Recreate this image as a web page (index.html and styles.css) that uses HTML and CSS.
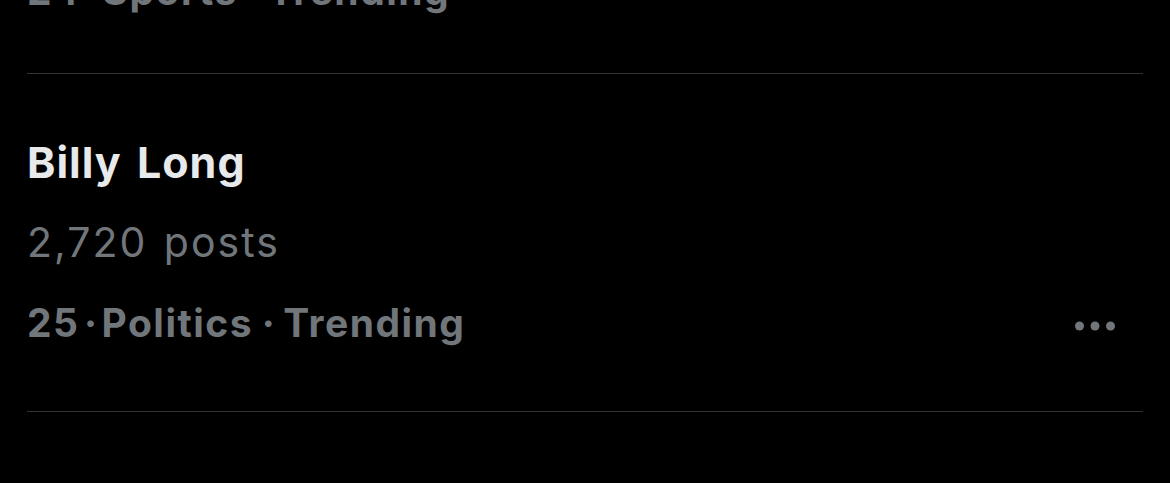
FILE: index.html
```html
<!DOCTYPE html>
<html lang="en">
<head>
<meta charset="utf-8">
<title>Trending</title>
<link rel="stylesheet" href="styles.css">
</head>
<body>
<div class="list">
  <div class="item item-partial">
    <div class="meta"><span>24</span><span class="sep sep-rank">·</span><span>Sports</span><span class="sep">·</span><span>Trending</span></div>
  </div>
  <div class="item">
    <div class="title">Billy Long</div>
    <div class="posts">2,720 posts</div>
    <div class="meta-row">
      <div class="meta"><span>25</span><span class="sep sep-rank">·</span><span>Politics</span><span class="sep">·</span><span>Trending</span></div>
      <svg class="more" width="40" height="12" viewBox="0 0 40 12" aria-hidden="true">
        <circle cx="4.5" cy="6" r="4.5"/>
        <circle cx="20" cy="6" r="4.5"/>
        <circle cx="35.5" cy="6" r="4.5"/>
      </svg>
    </div>
  </div>
</div>
</body>
</html>
```
FILE: styles.css
```css
html, body {
  margin: 0;
  padding: 0;
  background: #000;
  height: 100%;
  overflow: hidden;
}
body {
  font-family: Inter, "Liberation Sans", sans-serif;
  -webkit-font-smoothing: antialiased;
}
.list {
  padding: 0 27px;
}
.item {
  border-bottom: 1px solid #2f3336;
  padding: 48px 0 47px;
}
.item-partial {
  margin-top: -50px;
  padding: 0 0 41px;
}
.title {
  color: #e7e9ea;
  font-size: 43px;
  font-weight: 700;
  line-height: 80px;
  letter-spacing: 1px;
  word-spacing: 4px;
}
.posts {
  color: #71767b;
  font-size: 41px;
  font-weight: 400;
  line-height: 80px;
  letter-spacing: 2px;
  word-spacing: 3px;
}
.meta-row {
  display: flex;
  align-items: center;
  justify-content: space-between;
}
.meta {
  color: #71767b;
  font-size: 39px;
  font-weight: 700;
  line-height: 82px;
  letter-spacing: 1.5px;
  white-space: nowrap;
}
.sep {
  display: inline-block;
  width: 30px;
  text-align: center;
  letter-spacing: 0;
}
.sep-rank {
  width: 22px;
}
.more {
  fill: #71767b;
  margin-right: 28px;
  margin-top: 6px;
  flex: none;
}
```
